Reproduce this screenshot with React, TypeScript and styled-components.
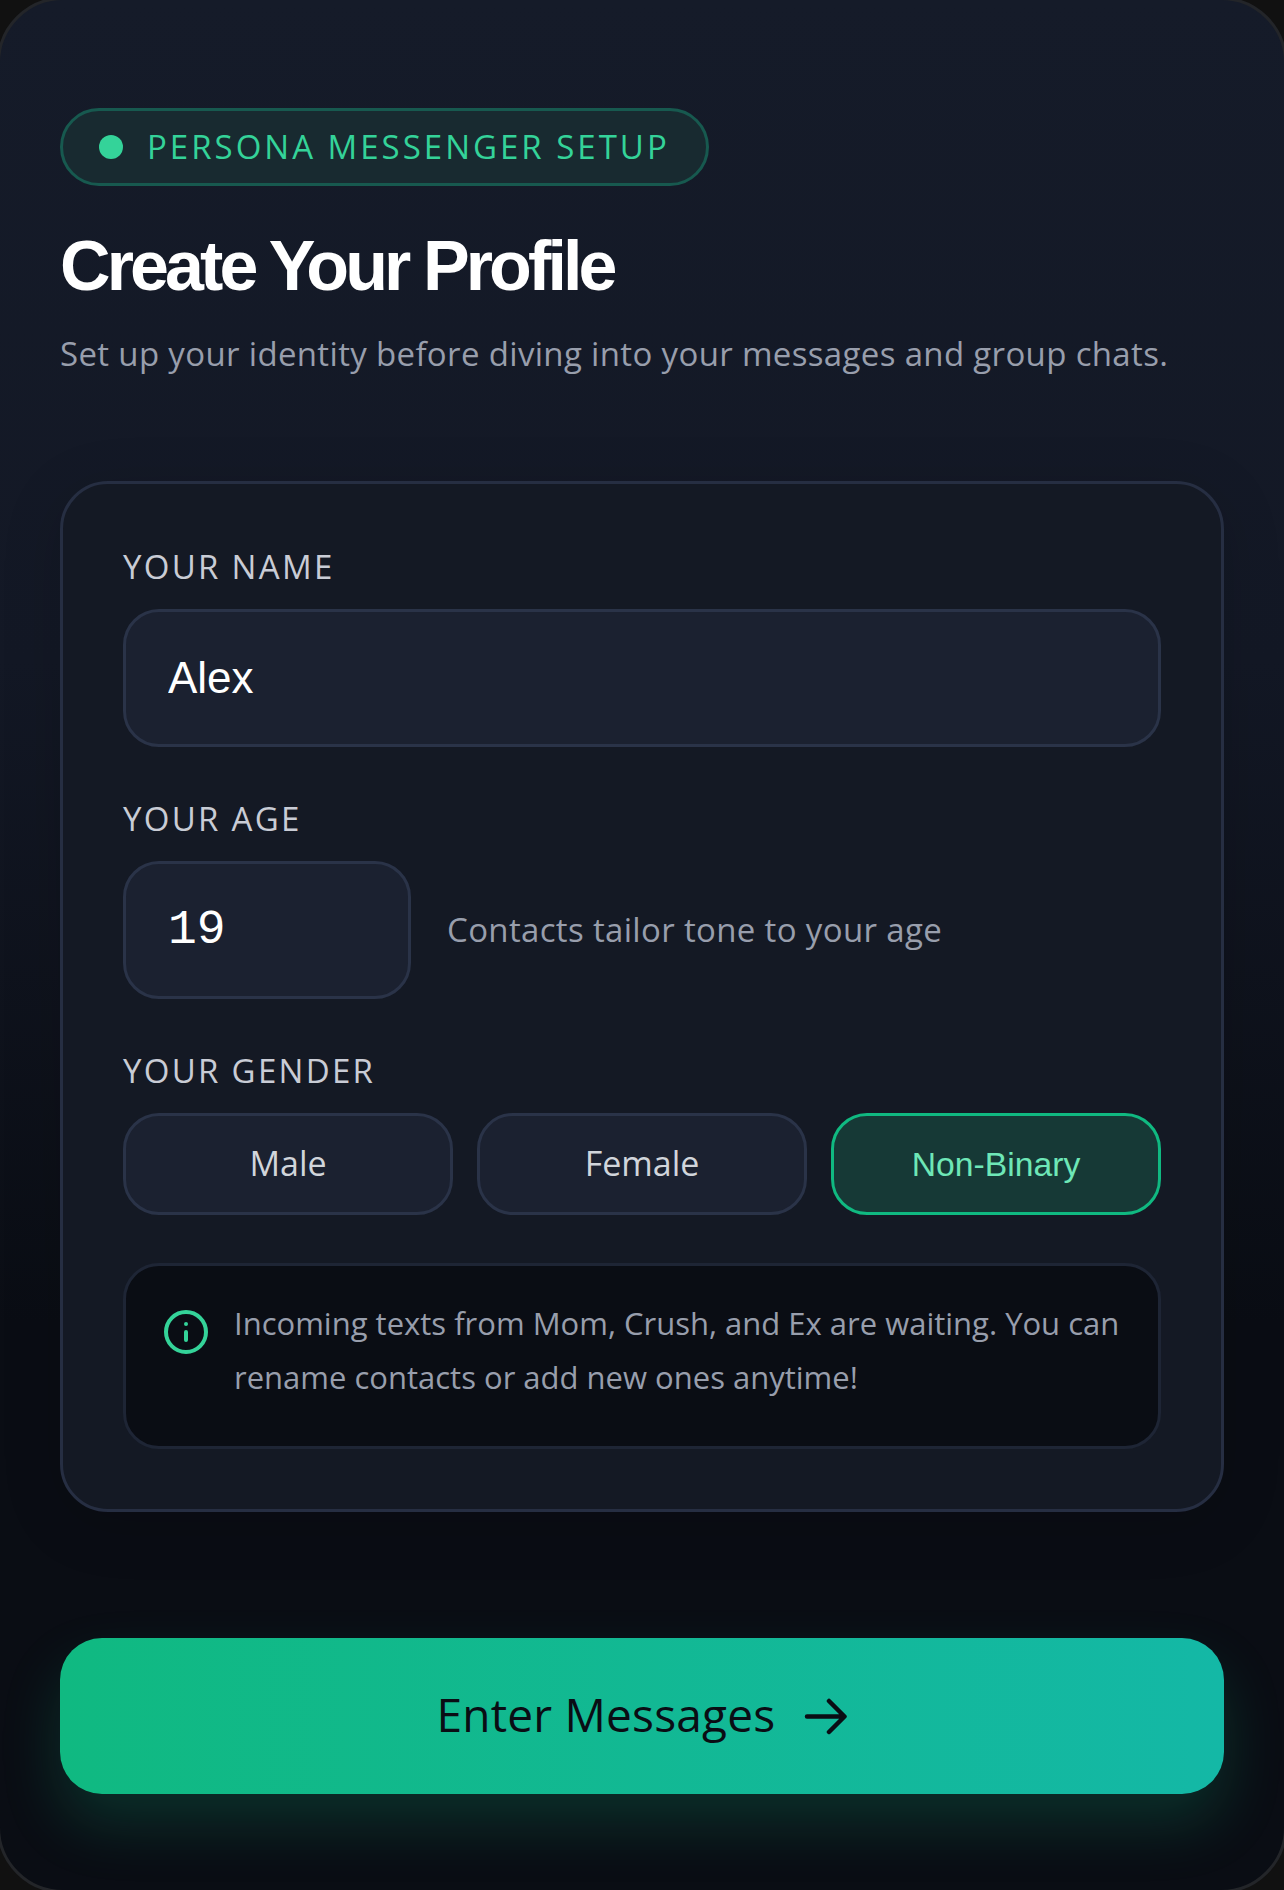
import React from 'react';
import styled, { createGlobalStyle } from 'styled-components';

const GlobalStyle = createGlobalStyle`
  html, body {
    margin: 0;
    padding: 0;
    height: 1890px;
    overflow: hidden;
    background: #111111;
  }
  * {
    box-sizing: border-box;
  }
`;

const font = `"Open Sans", "Liberation Sans", sans-serif`;
const plainFont = `"Liberation Sans", Arial, sans-serif`;

// the border sits just outside the window, so only the corners show it
const Screen = styled.div`
  width: 1290px;
  height: 1896px;
  margin: -3px;
  padding: 108px 60px 96px;
  display: flex;
  flex-direction: column;
  border: 3px solid #232529;
  border-radius: 66px;
  background: linear-gradient(180deg, #151b29 0%, #131825 35%, #0a0d14 70%, #0a0d14 100%);
  font-family: ${font};
`;

const Badge = styled.div`
  align-self: flex-start;
  display: flex;
  align-items: center;
  gap: 24px;
  height: 78px;
  padding: 0 36px;
  border: 3px solid #17594f;
  border-radius: 39px;
  background: #182a30;
  color: #34d399;
  font-size: 33px;
  letter-spacing: 3px;
  white-space: nowrap;
`;

const BadgeText = styled.span`
  margin-bottom: 2px;
`;

const Dot = styled.span`
  width: 24px;
  height: 24px;
  border-radius: 50%;
  background: #34d399;
`;

const Title = styled.h1`
  margin: 37px 0 0;
  color: #ffffff;
  font-family: ${plainFont};
  font-size: 70px;
  font-weight: 700;
  line-height: 86px;
  letter-spacing: -3.9px;
`;

const Subtitle = styled.p`
  margin: 22px 0 0;
  color: #989eac;
  font-size: 33px;
  line-height: 46px;
  letter-spacing: 0.34px;
  white-space: nowrap;
`;

const Card = styled.section`
  margin: 104px 0 0;
  padding: 60px;
  display: flex;
  flex-direction: column;
  border: 3px solid #262e42;
  border-radius: 48px;
  background: #141924;
  box-shadow: 0 12px 60px rgba(0, 0, 0, 0.15);
`;

const FieldLabel = styled.label<{ $first?: boolean }>`
  display: block;
  margin: ${({ $first }) => ($first ? '0' : '49px')} 0 19px;
  color: #c9ccd5;
  font-size: 33px;
  line-height: 46px;
  letter-spacing: 2.3px;
`;

const TextInput = styled.input<{ $width?: number; $mono?: boolean }>`
  display: block;
  flex: none;
  width: ${({ $width }) => ($width ? `${$width}px` : '100%')};
  height: 138px;
  padding: 0 42px;
  border: 3px solid #2a3348;
  border-radius: 36px;
  outline: none;
  background: #1b2130;
  color: #ffffff;
  font-family: ${({ $mono }) => ($mono ? `"Liberation Mono", monospace` : plainFont)};
  font-size: ${({ $mono }) => ($mono ? '48px' : '44px')};
`;

const AgeRow = styled.div`
  display: flex;
  align-items: center;
  gap: 36px;
`;

const Hint = styled.span`
  margin-bottom: 2px;
  color: #989eac;
  font-size: 33px;
  letter-spacing: 0.34px;
`;

const GenderRow = styled.div`
  display: grid;
  grid-template-columns: repeat(3, 1fr);
  gap: 24px;
`;

const GenderButton = styled.button<{ $active?: boolean }>`
  height: 102px;
  padding: 0 0 ${({ $active }) => ($active ? '0' : '2px')};
  border: 3px solid ${({ $active }) => ($active ? '#10b981' : '#2a3348')};
  border-radius: 36px;
  background: ${({ $active }) => ($active ? '#163936' : '#1b2130')};
  color: ${({ $active }) => ($active ? '#6ee7b7' : '#d1d5db')};
  font-family: ${({ $active }) => ($active ? plainFont : font)};
  font-size: ${({ $active }) => ($active ? '33.7px' : '34px')};
`;

const InfoBox = styled.div`
  display: flex;
  gap: 24px;
  margin-top: 48px;
  padding: 30px 36px 42px;
  border: 3px solid #1e2535;
  border-radius: 36px;
  background: #0a0d14;
`;

const InfoIcon = styled.svg`
  flex: none;
  width: 48px;
  height: 48px;
  margin-top: 12px;
  color: #34d399;
`;

const InfoText = styled.p`
  margin: 0;
  color: #989eac;
  font-size: 31px;
  line-height: 54px;
`;

const Submit = styled.button`
  display: flex;
  align-items: center;
  justify-content: center;
  gap: 29px;
  flex: none;
  height: 156px;
  margin: 126px 0 0;
  border: none;
  border-radius: 42px;
  background: linear-gradient(90deg, #10b981 0%, #14b8a6 100%);
  box-shadow: 0 30px 60px rgba(16, 185, 129, 0.2);
  color: #0a0d14;
  font-family: ${font};
  font-size: 46px;
  letter-spacing: 0.2px;
`;

const SubmitText = styled.span`
  margin-bottom: 4px;
`;

const App: React.FC = () => {
  return (
    <>
      <GlobalStyle />
      <Screen>
        <Badge>
          <Dot />
          <BadgeText>PERSONA MESSENGER SETUP</BadgeText>
        </Badge>
        <Title>Create Your Profile</Title>
        <Subtitle>Set up your identity before diving into your messages and group chats.</Subtitle>
        <Card>
          <FieldLabel $first>YOUR NAME</FieldLabel>
          <TextInput readOnly value="Alex" />
          <FieldLabel>YOUR AGE</FieldLabel>
          <AgeRow>
            <TextInput readOnly value="19" $width={288} $mono />
            <Hint>Contacts tailor tone to your age</Hint>
          </AgeRow>
          <FieldLabel>YOUR GENDER</FieldLabel>
          <GenderRow>
            <GenderButton>Male</GenderButton>
            <GenderButton>Female</GenderButton>
            <GenderButton $active>Non-Binary</GenderButton>
          </GenderRow>
          <InfoBox>
            <InfoIcon viewBox="0 0 24 24" fill="none" stroke="currentColor" strokeWidth="2" strokeLinecap="round">
              <circle cx="12" cy="12" r="10" />
              <path d="M12 16v-4M12 8h.01" />
            </InfoIcon>
            <InfoText>
              Incoming texts from Mom, Crush, and Ex are waiting. You can rename contacts or add new ones anytime!
            </InfoText>
          </InfoBox>
        </Card>
        <Submit>
          <SubmitText>Enter Messages</SubmitText>
          <svg width="43" height="37" viewBox="0 0 43 37" fill="none" stroke="currentColor" strokeWidth="4.5" strokeLinecap="round" strokeLinejoin="round">
            <path d="M3 18.5h37M25 3l15.5 15.5L25 34" />
          </svg>
        </Submit>
      </Screen>
    </>
  );
};

export default App;
